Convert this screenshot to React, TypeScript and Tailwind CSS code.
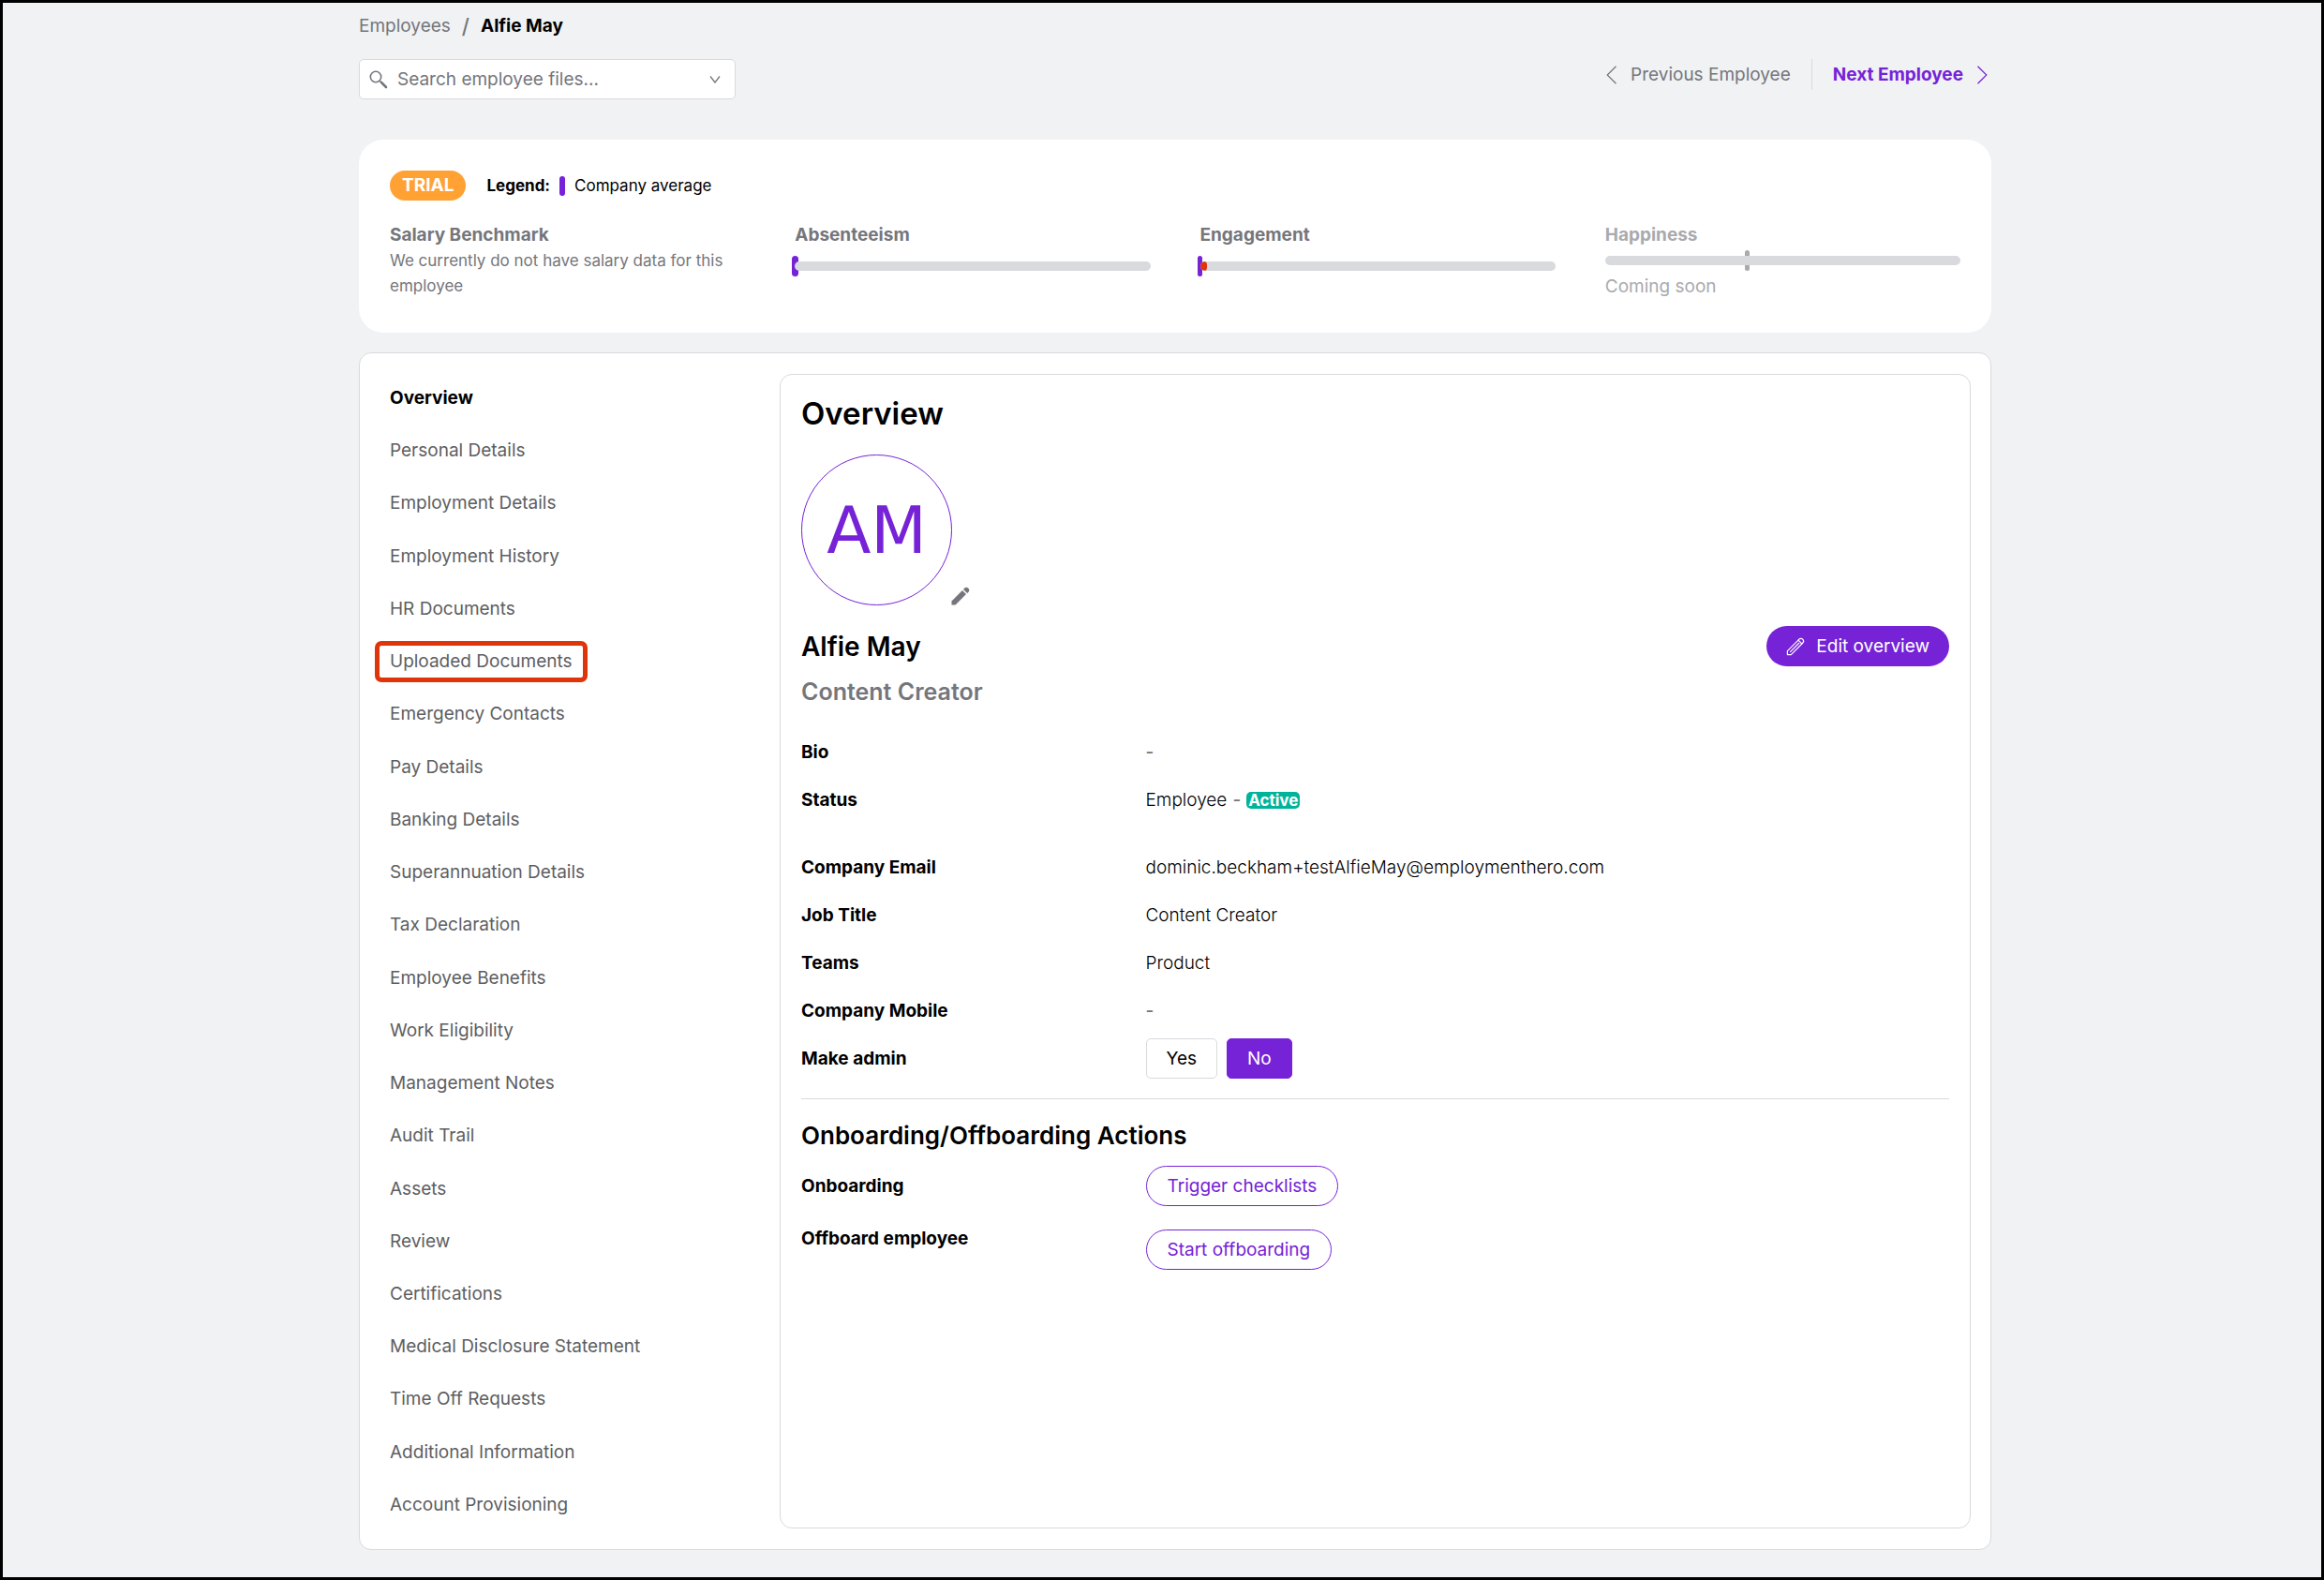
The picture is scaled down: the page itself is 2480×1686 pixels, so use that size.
import clsx from 'clsx'
import { useState } from 'react'
import type { ReactNode } from 'react'

const navItems = [
  'Overview',
  'Personal Details',
  'Employment Details',
  'Employment History',
  'HR Documents',
  'Uploaded Documents',
  'Emergency Contacts',
  'Pay Details',
  'Banking Details',
  'Superannuation Details',
  'Tax Declaration',
  'Employee Benefits',
  'Work Eligibility',
  'Management Notes',
  'Audit Trail',
  'Assets',
  'Review',
  'Certifications',
  'Medical Disclosure Statement',
  'Time Off Requests',
  'Additional Information',
  'Account Provisioning',
]

const ACTIVE_ITEM = 'Overview'
const HIGHLIGHTED_ITEM = 'Uploaded Documents'

function SearchIcon() {
  return (
    <svg viewBox="0 0 20 20" className="h-5 w-5 shrink-0" fill="none" stroke="#75767b" aria-hidden="true">
      <circle cx="7" cy="7" r="5.7" strokeWidth="1.6" />
      <path d="M11.2 11.2l2 2" strokeWidth="1.6" />
      <path d="M13 13l5 5" strokeWidth="2.6" strokeLinecap="round" />
    </svg>
  )
}

function ChevronDown() {
  return (
    <svg viewBox="0 0 12 8" className="h-2 w-3 shrink-0" fill="none" stroke="#75767b" strokeWidth="1.3" aria-hidden="true">
      <path d="M1 .5l5 6.5 5-6.5" />
    </svg>
  )
}

function Chevron({ direction }: { direction: 'left' | 'right' }) {
  return (
    <svg viewBox="0 0 12 20" className="h-5 w-3 shrink-0" fill="none" stroke="currentColor" strokeWidth="1.2" aria-hidden="true">
      <path d={direction === 'left' ? 'M10.5 .8L1.2 10l9.3 9.2' : 'M1.5 .8L10.8 10l-9.3 9.2'} />
    </svg>
  )
}

function PencilSolid() {
  return (
    <svg viewBox="0 0 20 20" className="h-5 w-5" fill="#75767b" aria-hidden="true">
      <path d="M0.5 19.5V15.4L11.9 4l4.1 4.1L4.6 19.5z" />
      <path d="M13 2.9l1.1-1.2a2.9 2.9 0 0 1 4.2 4.2l-1.2 1.1z" />
    </svg>
  )
}

function PencilOutline() {
  return (
    <svg viewBox="0 0 20 20" className="h-5 w-5 shrink-0" fill="none" stroke="white" strokeWidth="1.2" strokeLinejoin="round" aria-hidden="true">
      <path d="M1.4 18.6v-3.9L13 3.1l3.9 3.9L5.3 18.6z" />
      <path d="M13 3.1l.8-.9a2.75 2.75 0 0 1 3.9 3.9l-.8.9" />
      <path d="M4.2 15.8L14 6" />
    </svg>
  )
}

function Track({ children }: { children?: ReactNode }) {
  return <div className="relative flex h-[22px] items-center">{children}</div>
}

function Metric({ title, children, muted }: { title: string; children: ReactNode; muted?: boolean }) {
  return (
    <section className={muted ? 'text-[#a9aaaf]' : 'text-[#75767b]'}>
      <h2 className="text-[19px] leading-7 font-bold">{title}</h2>
      {children}
    </section>
  )
}

function Field({ label, children, className }: { label: string; children: ReactNode; className?: string }) {
  return (
    <div className={clsx('grid h-[51px] grid-cols-[30%_70%] items-center', className)}>
      <dt className="font-bold">{label}</dt>
      <dd className="font-light">{children}</dd>
    </div>
  )
}

function PillButton({ children }: { children: ReactNode }) {
  return (
    <button className="h-[43px] rounded-full border border-[#7622d7] bg-white px-[22px] text-[#7622d7]">
      {children}
    </button>
  )
}

export default function App() {
  const [query, setQuery] = useState('')
  const [isAdmin, setIsAdmin] = useState(false)

  return (
    <div className="min-h-screen border-[3px] border-black bg-[#f0f2f4] pl-7 font-['Inter',sans-serif] text-[19px] leading-7 text-black">
      <div className="mx-auto max-w-[1742px] pt-[11px] pb-[29px]">
        <nav aria-label="Breadcrumb" className="flex items-center gap-3">
          <a href="#employees" className="text-[#75767b]">Employees</a>
          <span className="text-[22px] font-medium text-[#75767b]">/</span>
          <span className="font-bold">Alfie May</span>
        </nav>

        <div className="mt-[21px] flex items-start justify-between">
          <label className="flex h-[43px] w-[402px] items-center gap-2.5 rounded-[5px] border border-[#d9dade] bg-white pr-[15px] pl-2.5">
            <SearchIcon />
            <input
              type="text"
              aria-label="Search employee files"
              placeholder="Search employee files..."
              value={query}
              onChange={(e) => setQuery(e.target.value)}
              className="min-w-0 flex-1 bg-transparent outline-none placeholder:text-[#75767b]"
            />
            <ChevronDown />
          </label>

          <div className="flex h-[33px] items-center">
            <a href="#previous" className="flex items-center gap-3.5 pr-[22px] text-[#75767b]">
              <Chevron direction="left" />
              Previous Employee
            </a>
            <a href="#next" className="flex h-full items-center gap-3.5 border-l border-[#d9dade] pr-1 pl-[22px] font-bold text-[#7622d7]">
              Next Employee
              <Chevron direction="right" />
            </a>
          </div>
        </div>

        <div className="mt-[43px] rounded-[26px] bg-white px-[33px] pt-[33px] pb-9">
          <div className="flex items-center text-[17px]">
            <span className="flex h-8 items-center rounded-full bg-[#ffa233] px-[13px] text-[19px] font-bold text-white">TRIAL</span>
            <span className="ml-[22px] font-bold">Legend:</span>
            <span className="mr-2.5 ml-2.5 h-[21px] w-1.5 rounded-full bg-[#7622d7]" />
            <span>Company average</span>
          </div>

          <div className="mt-[23px] grid grid-cols-4 gap-[53px]">
            <Metric title="Salary Benchmark">
              <p className="text-[17px] leading-[27px]">We currently do not have salary data for this employee</p>
            </Metric>
            <Metric title="Absenteeism">
              <div className="pt-2">
                <Track>
                  <span className="absolute top-0 -left-[3px] h-[22px] w-[7px] rounded-full bg-[#7622d7]" />
                  <span className="relative h-2.5 w-full rounded-full bg-[#d9dade]" />
                </Track>
              </div>
            </Metric>
            <Metric title="Engagement">
              <div className="pt-2">
                <Track>
                  <span className="absolute top-0 -left-[3px] h-[22px] w-[5px] rounded-full bg-[#7622d7]" />
                  <span className="relative h-2.5 w-full overflow-hidden rounded-full bg-[#d9dade]">
                    <span className="block h-2.5 w-[7px] rounded-full bg-[#e0340b]" />
                  </span>
                </Track>
              </div>
            </Metric>
            <Metric title="Happiness" muted>
              <div className="pt-0.5 pb-[3px]">
                <Track>
                  <span className="absolute top-0 left-[39.4%] h-[22px] w-[5px] rounded-full bg-[#a9aaaf]" />
                  <span className="relative h-2.5 w-full rounded-full bg-[#d9dade]" />
                </Track>
              </div>
              <p className="leading-[27px]">Coming soon</p>
            </Metric>
          </div>
        </div>

        <div className="mt-[21px] flex rounded-[13px] border border-[#d9dade] bg-white py-[22px] pr-[21px] pl-8">
          <ul className="flex w-[416px] shrink-0 flex-col justify-between pt-3 pb-[11px]">
            {navItems.map((item) => (
              <li key={item} className="flex">
                <a
                  href={`#${item.toLowerCase().replace(/ /g, '-')}`}
                  aria-current={item === ACTIVE_ITEM ? 'page' : undefined}
                  className={clsx('relative', item === ACTIVE_ITEM ? 'font-bold text-black' : 'text-[#5d5e62]')}
                >
                  {item}
                  {item === HIGHLIGHTED_ITEM && (
                    <span className="absolute -inset-x-4 -inset-y-2 rounded-[7px] border-[5px] border-[#e0340b]" />
                  )}
                </a>
              </li>
            ))}
          </ul>

          <main className="min-h-[1232px] flex-1 rounded-[13px] border border-[#d9dade] px-[22px] pt-[21px]">
            <h1 className="text-[33px] leading-10 font-semibold">Overview</h1>

            <div className="mt-6 flex items-end">
              <div className="flex h-[161px] w-[161px] items-center justify-center rounded-full border border-[#7622d7] font-['DejaVu_Sans',sans-serif] text-[69px] text-[#7622d7]">
                AM
              </div>
              <button aria-label="Change photo" className="-ml-px">
                <PencilSolid />
              </button>
            </div>

            <div className="mt-[22px] flex items-center justify-between">
              <h2 className="text-[28px] font-semibold">Alfie May</h2>
              <button className="flex h-[43px] items-center gap-3 rounded-full bg-[#7622d7] px-[21px] text-white">
                <PencilOutline />
                Edit overview
              </button>
            </div>
            <p className="mt-[11px] text-[25px] leading-8 font-semibold text-[#75767b]">Content Creator</p>

            <dl className="mt-[23px]">
              <Field label="Bio">
                <span className="font-medium text-[#75767b]">-</span>
              </Field>
              <Field label="Status" className="mb-[21px]">
                <span className="flex items-center">
                  Employee
                  <span className="mx-1.5 font-medium text-[#75767b]">-</span>
                  <span className="rounded-[5px] bg-[#00b39b] px-0.5 text-[17px] leading-[18px] font-bold text-white">Active</span>
                </span>
              </Field>
              <Field label="Company Email">dominic.beckham+testAlfieMay@employmenthero.com</Field>
              <Field label="Job Title">Content Creator</Field>
              <Field label="Teams">Product</Field>
              <Field label="Company Mobile">
                <span className="font-medium text-[#75767b]">-</span>
              </Field>
              <Field label="Make admin">
                <span className="flex gap-2.5">
                  {['Yes', 'No'].map((option) => {
                    const selected = isAdmin === (option === 'Yes')
                    return (
                      <button
                        key={option}
                        aria-pressed={selected}
                        onClick={() => setIsAdmin(option === 'Yes')}
                        className={clsx(
                          'h-[43px] rounded-[5px] border px-[21px] font-normal',
                          selected ? 'border-[#7622d7] bg-[#7622d7] text-white' : 'border-[#d9dade] bg-white text-black',
                        )}
                      >
                        {option}
                      </button>
                    )
                  })}
                </span>
              </Field>
            </dl>

            <hr className="mt-[17px] border-[#d9dade]" />

            <h2 className="mt-[21px] text-[26px] leading-9 font-semibold">Onboarding/Offboarding Actions</h2>
            <div className="mt-3.5 grid grid-cols-[30%_70%] items-center">
              <span className="font-bold">Onboarding</span>
              <div className="flex">
                <PillButton>Trigger checklists</PillButton>
              </div>
            </div>
            <div className="mt-[21px] grid grid-cols-[30%_70%] items-start">
              <span className="font-bold">Offboard employee</span>
              <div className="flex pt-1">
                <PillButton>Start offboarding</PillButton>
              </div>
            </div>
          </main>
        </div>
      </div>
    </div>
  )
}
